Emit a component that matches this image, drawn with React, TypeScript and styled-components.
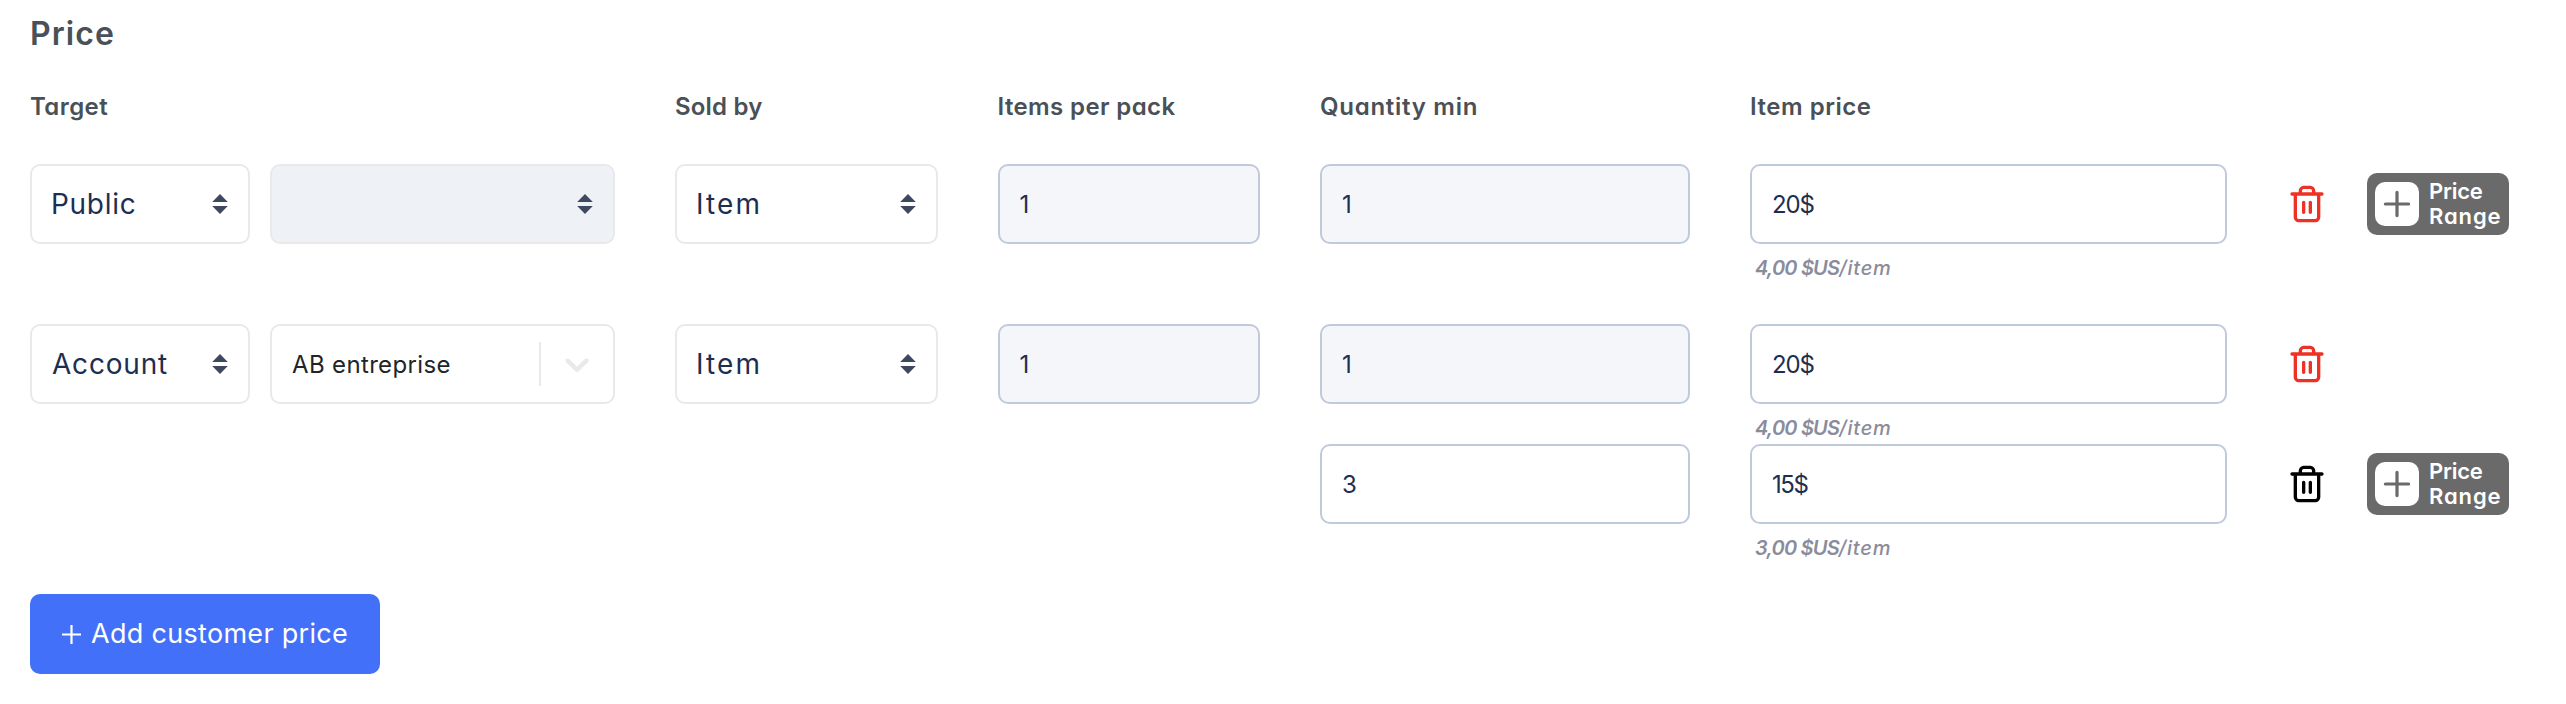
import React from 'react';
import styled, { createGlobalStyle, css } from 'styled-components';

const GlobalStyle = createGlobalStyle`
  * { box-sizing: border-box; }
  body {
    margin: 0;
    background: #fff;
    font-family: Inter, "Liberation Sans", sans-serif;
    font-feature-settings: "cv11" 1;
  }
`;

const Panel = styled.main`
  display: flex;
  flex-direction: column;
  align-items: flex-start;
  width: 2566px;
  height: 704px;
  padding: 14px 30px 0;
`;

const Title = styled.h2`
  margin: 0 0 33px;
  font-size: 32px;
  line-height: 40px;
  font-weight: 600;
  letter-spacing: 1.1px;
  color: #495057;
`;

const Row = styled.div`
  display: grid;
  grid-template-columns: 585px 262.5px 262.5px 370px 477px 40px 142px;
  column-gap: 60px;
  align-items: start;
`;

const TrashSlot = styled.div`
  grid-column: 6;
  display: flex;
  align-items: center;
  height: 80px;
`;

const RangeSlot = styled.div`
  grid-column: 7;
  display: flex;
  align-items: center;
  height: 80px;
  margin-left: -20px;
`;

const HeaderRow = styled(Row)`
  margin-bottom: 37px;
`;

const HeaderLabel = styled.span<{ $spacing: number }>`
  font-size: 24px;
  line-height: 40px;
  font-weight: 600;
  letter-spacing: ${(p) => p.$spacing}px;
  color: #495057;
  white-space: nowrap;
`;

const Groups = styled.div`
  display: flex;
  flex-direction: column;
  gap: 40px;
  margin-bottom: 30px;
`;

const Target = styled.div`
  display: grid;
  grid-template-columns: 220px 345px;
  column-gap: 20px;
`;

const frame = css`
  display: flex;
  align-items: center;
  height: 80px;
  border: 2px solid #e9e9ea;
  border-radius: 10px;
`;

const SelectBox = styled.div<{ $disabled?: boolean }>`
  ${frame}
  justify-content: space-between;
  padding: 0 20px 0 19px;
  background: ${(p) => (p.$disabled ? '#eef1f6' : '#fff')};
`;

const SelectText = styled.span<{ $spacing: number; $indent?: number }>`
  padding-left: ${(p) => p.$indent ?? 0}px;
  font-size: 28px;
  line-height: 40px;
  letter-spacing: ${(p) => p.$spacing}px;
  color: #1e2e50;
`;

const ComboBox = styled.div`
  ${frame}
`;

const ComboText = styled.span`
  flex: 1;
  padding-left: 20px;
  font-size: 24px;
  letter-spacing: 0.35px;
  color: #212529;
`;

const ComboDivider = styled.span`
  width: 2px;
  height: 44px;
  background: #e8e9eb;
`;

const ComboIndicator = styled.span`
  display: flex;
  padding: 0 16px;
  color: #e8e9eb;
`;

const Field = styled.div<{ $disabled?: boolean }>`
  ${frame}
  padding: 0 20px;
  border-color: #bfcadb;
  background: ${(p) => (p.$disabled ? '#f4f6fa' : '#fff')};
  font-size: 24px;
  color: #1e2e50;
`;

const FieldText = styled.span<{ $spacing?: number }>`
  letter-spacing: ${(p) => p.$spacing ?? 0}px;
`;

const PriceCell = styled.div`
  grid-column: 5;
  height: 120px;
`;

const QuantityCell = styled.div`
  grid-column: 4;
`;

const Hint = styled.div`
  padding: 8px 0 0 5px;
  font-size: 20px;
  line-height: 32px;
  font-style: italic;
  font-weight: 500;
  letter-spacing: 0.8px;
  color: #8a8c9c;
`;

const HintAmount = styled.span`
  font-weight: 600;
  letter-spacing: -0.8px;
`;

const Badge = styled.div`
  display: flex;
  align-items: center;
  gap: 10px;
  width: 142px;
  height: 62px;
  padding: 0 8px;
  border-radius: 10px;
  background: #6a6a6a;
  color: #fff;
`;

const BadgeIcon = styled.span`
  display: flex;
  flex: none;
  width: 44px;
  height: 44px;
  border-radius: 10px;
  background: #fff;
`;

const BadgeText = styled.span`
  display: flex;
  flex-direction: column;
  font-size: 22px;
  line-height: 25px;
  font-weight: 600;
`;

const BadgeWord = styled.span<{ $spacing: number }>`
  letter-spacing: ${(p) => p.$spacing}px;
`;

const AddButton = styled.button`
  display: flex;
  align-items: center;
  gap: 10px;
  width: 350px;
  height: 80px;
  padding: 0 0 0 32px;
  border: 0;
  border-radius: 10px;
  background: #4370f8;
  color: #fff;
  font: 400 27px/40px Inter, "Liberation Sans", sans-serif;
  font-feature-settings: "cv11" 1;
  letter-spacing: 0.3px;
  white-space: nowrap;
`;

const Sorter = () => (
  <svg width="16" height="20" viewBox="0 0 16 20" fill="#3f4861">
    <path d="M8 0 15.8 8H.2zM8 20 .2 12h15.6z" />
  </svg>
);

const Chevron = () => (
  <svg width="40" height="40" viewBox="0 0 20 20" fill="currentColor">
    <path d="M4.516 7.548c0.436-0.446 1.043-0.481 1.576 0l3.908 3.747 3.908-3.747c0.533-0.481 1.141-0.446 1.574 0 0.436 0.445 0.408 1.197 0 1.615-0.406 0.418-4.695 4.502-4.695 4.502-0.217 0.223-0.502 0.335-0.787 0.335s-0.57-0.112-0.789-0.335c0 0-4.287-4.084-4.695-4.502s-0.436-1.17 0-1.615z" />
  </svg>
);

const Trash = ({ color }: { color: string }) => (
  <TrashSlot>
    <svg width="40" height="40" viewBox="0 0 24 24" fill="none" stroke={color} strokeWidth="2" strokeLinecap="round" strokeLinejoin="round">
      <path d="M3 6h18M19 6v14c0 1-1 2-2 2H7c-1 0-2-1-2-2V6M8 6V4c0-1 1-2 2-2h4c1 0 2 1 2 2v2M10 11v6M14 11v6" />
    </svg>
  </TrashSlot>
);

const PriceRange = () => (
  <RangeSlot>
    <Badge>
      <BadgeIcon>
        <svg width="44" height="44" viewBox="0 0 44 44" stroke="#6a6a6a" strokeWidth="3.2" strokeLinecap="round">
          <path d="M22 10.4v23.2M10.4 22h23.2" />
        </svg>
      </BadgeIcon>
      <BadgeText>
        <BadgeWord $spacing={-0.25}>Price</BadgeWord>
        <BadgeWord $spacing={0.9}>Range</BadgeWord>
      </BadgeText>
    </Badge>
  </RangeSlot>
);

const Select = ({ label, spacing, indent }: { label: string; spacing: number; indent?: number }) => (
  <SelectBox>
    <SelectText $spacing={spacing} $indent={indent}>{label}</SelectText>
    <Sorter />
  </SelectBox>
);

const Price = ({ value, spacing, amount }: { value: string; spacing: number; amount: string }) => (
  <PriceCell>
    <Field><FieldText $spacing={spacing}>{value}</FieldText></Field>
    <Hint><HintAmount>{amount}</HintAmount>/item</Hint>
  </PriceCell>
);

const Quantity = ({ value, disabled }: { value: string; disabled?: boolean }) => (
  <QuantityCell>
    <Field $disabled={disabled}><FieldText>{value}</FieldText></Field>
  </QuantityCell>
);

const headers: [string, number][] = [
  ['Target', 0.4],
  ['Sold by', 0.2],
  ['Items per pack', 0.38],
  ['Quantity min', 0.72],
  ['Item price', 0.52],
];

export default function App() {
  return (
    <>
      <GlobalStyle />
      <Panel>
        <Title>Price</Title>
        <HeaderRow>
          {headers.map(([text, spacing]) => (
            <HeaderLabel key={text} $spacing={spacing}>{text}</HeaderLabel>
          ))}
        </HeaderRow>
        <Groups>
          <Row>
            <Target>
              <Select label="Public" spacing={0.7} />
              <SelectBox $disabled>
                <span />
                <Sorter />
              </SelectBox>
            </Target>
            <Select label="Item" spacing={2.1} />
            <Field $disabled><FieldText>1</FieldText></Field>
            <Quantity value="1" disabled />
            <Price value="20$" spacing={-1.2} amount="4,00 $US" />
            <Trash color="#ee3124" />
            <PriceRange />
          </Row>
          <div>
            <Row>
              <Target>
                <Select label="Account" spacing={0.8} indent={1} />
                <ComboBox>
                  <ComboText>AB entreprise</ComboText>
                  <ComboDivider />
                  <ComboIndicator><Chevron /></ComboIndicator>
                </ComboBox>
              </Target>
              <Select label="Item" spacing={2.1} />
              <Field $disabled><FieldText>1</FieldText></Field>
              <Quantity value="1" disabled />
              <Price value="20$" spacing={-1.2} amount="4,00 $US" />
              <Trash color="#ee3124" />
            </Row>
            <Row>
              <Quantity value="3" />
              <Price value="15$" spacing={-1.4} amount="3,00 $US" />
              <Trash color="#000" />
              <PriceRange />
            </Row>
          </div>
        </Groups>
        <AddButton>
          <svg width="19" height="19" viewBox="0 0 19 19" stroke="#fff" strokeWidth="2.2">
            <path d="M9.5 0v19M0 9.5h19" />
          </svg>
          Add customer price
        </AddButton>
      </Panel>
    </>
  );
}
